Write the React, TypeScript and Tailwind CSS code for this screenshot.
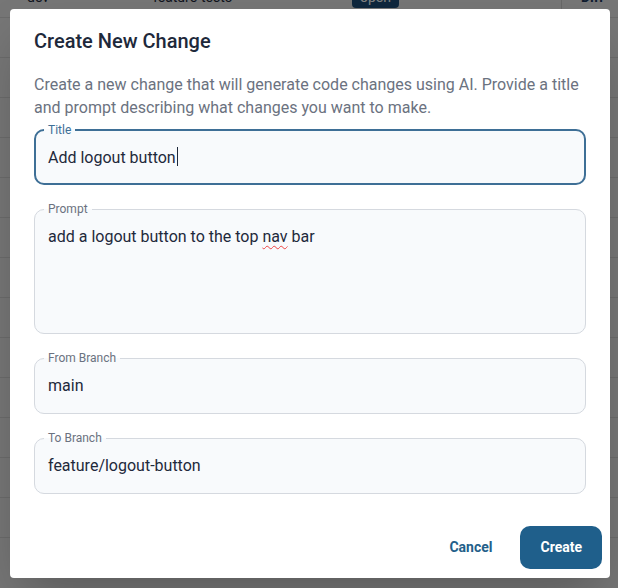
import React from "react";

const rows = Array.from({ length: 14 });

function BackgroundTable() {
  return (
    <div className="h-[588px] overflow-hidden bg-[#ececec] text-[14px] text-[#1e293b]">
      <div className="-mt-[22px]">
        {rows.map((_, i) => (
          <div key={i} className="flex h-[40px] items-center border-b border-[#d6d6d6]">
            <span className="w-[153px] pl-[27px]">{i === 0 ? "dev" : ""}</span>
            <span className="w-[199px]">{i === 0 ? "feature-test3" : ""}</span>
            <span className="w-[209px]">
              {i === 0 && (
                <span className="inline-block rounded-sm bg-[#1e4f7a] px-2 text-white">open</span>
              )}
            </span>
            <span className="flex h-full items-center border-l border-[#cfcfcf] pl-[19px] font-bold text-[#1e3a5f]">
              {i === 0 ? "Diff" : ""}
            </span>
          </div>
        ))}
      </div>
    </div>
  );
}

function Field({
  label,
  value,
  focused = false,
  tall = false,
}: {
  label: string;
  value: React.ReactNode;
  focused?: boolean;
  tall?: boolean;
}) {
  return (
    <fieldset
      className={
        focused
          ? "m-0 rounded-[10px] border-2 border-[#3e6f96] bg-[#f8fafc] pb-[15px] pl-[12px] pr-3 pt-[6px]"
          : "m-0 rounded-[10px] border border-[#d5d9df] bg-[#f8fafc] pb-[15px] pl-[13px] pr-3 pt-2"
      }
    >
      <legend
        className={
          focused
            ? "-ml-1 px-1 text-[12px] leading-[16px] text-[#3e6f96]"
            : "-ml-1 px-1 text-[12px] leading-[16px] text-[#6b7280]"
        }
      >
        {label}
      </legend>
      <div className={tall ? "h-[93px] text-[16px] leading-[24px] text-[#1e293b]" : "h-[24px] text-[16px] leading-[24px] text-[#1e293b]"}>
        {value}
      </div>
    </fieldset>
  );
}

export default function App() {
  return (
    <div className="relative h-[588px] w-[618px] overflow-hidden" style={{ fontFamily: "Roboto, 'Noto Sans', sans-serif" }}>
      <BackgroundTable />
      <div className="absolute inset-0 bg-black/50" />
      <div className="absolute left-[10px] top-[9px] flex h-[569px] w-[600px] flex-col rounded-[4px] bg-white shadow-2xl">
        <h2 className="px-6 pt-4 pb-4 text-[20px] font-medium leading-[32px] text-[#1e293b]">
          Create New Change
        </h2>
        <div className="px-6">
          <p className="mb-[3px] text-[16px] leading-[23px] text-[#6b7280]">
            Create a new change that will generate code changes using AI. Provide a title and prompt describing what
            changes you want to make.
          </p>
          <div className="flex flex-col gap-4">
            <Field
              label="Title"
              focused
              value={
                <span>
                  Add logout button
                  <span className="ml-px inline-block h-[19px] w-px translate-y-[3px] bg-[#1e293b]" />
                </span>
              }
            />
            <Field
              label="Prompt"
              tall
              value={
                <span>
                  add a logout button to the top{" "}
                  <span className="underline decoration-[#ef4444] decoration-wavy decoration-1 underline-offset-[3px]">
                    nav
                  </span>{" "}
                  bar
                </span>
              }
            />
            <Field label="From Branch" value="main" />
            <Field label="To Branch" value="feature/logout-button" />
          </div>
        </div>
        <div className="mt-auto flex items-center justify-end gap-2 pb-[9px] pr-2">
          <button className="h-[43px] rounded-[10px] px-5 text-[14px] font-bold text-[#245f8a]">Cancel</button>
          <button className="h-[43px] rounded-[10px] bg-[#1f5f8b] px-5 text-[14px] font-bold text-white">
            Create
          </button>
        </div>
      </div>
    </div>
  );
}
